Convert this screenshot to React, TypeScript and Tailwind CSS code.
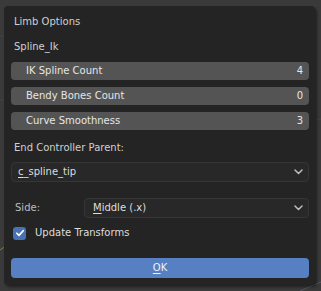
import React from "react";

function Chevron() {
  return (
    <svg width="9" height="6" viewBox="0 0 9 6" className="shrink-0">
      <path d="M1 1 L4.5 4.5 L8 1" fill="none" stroke="#bdbdbd" strokeWidth="1.5" strokeLinecap="round" strokeLinejoin="round" />
    </svg>
  );
}

function NumRow({ label, value, top }: { label: string; value: string; top: string }) {
  return (
    <div className={`${top} flex h-[18px] items-center justify-between rounded-[4px] bg-[#545454] pl-[15px] pr-[6px] text-[#e6e6e6]`}>
      <span>{label}</span>
      <span>{value}</span>
    </div>
  );
}

export default function App() {
  return (
    <div
      className="relative h-[291px] w-[321px] overflow-hidden bg-[#3a3a3a] pl-[4px] pt-[6px] text-[10px] leading-none"
      style={{ fontFamily: '"DejaVu Sans", sans-serif' }}
    >
      <svg className="absolute inset-0" width="321" height="291" viewBox="0 0 321 291">
        <line x1="0" y1="36" x2="4" y2="36" stroke="#444" strokeWidth="1" />
        <line x1="0" y1="100" x2="4" y2="100" stroke="#444" strokeWidth="1" />
        <line x1="0" y1="250" x2="6" y2="246" stroke="#6a8a3a" strokeWidth="1" />
        <line x1="300" y1="291" x2="321" y2="282" stroke="#556" strokeWidth="1" />
        <line x1="316" y1="120" x2="321" y2="119" stroke="#444" strokeWidth="1" />
      </svg>
      <div className="relative flex h-[279px] w-[311px] flex-col rounded-[4px] bg-[#242424] pl-[7px] pr-[6px] pt-[6px] text-[#d0d0d0] shadow-[2px_2px_3px_rgba(0,0,0,0.45)]">
        <div className="flex h-[20px] items-center pl-[3px]">Limb Options</div>
        <div className="mt-[5px] flex h-[20px] items-center pl-[3px]">Spline_Ik</div>
        <NumRow top="mt-[5px]" label="IK Spline Count" value="4" />
        <NumRow top="mt-[7px]" label="Bendy Bones Count" value="0" />
        <NumRow top="mt-[7px]" label="Curve Smoothness" value="3" />
        <div className="mt-[8px] flex h-[20px] items-center pl-[3px]">End Controller Parent:</div>
        <div className="mt-[4px] flex h-[20px] items-center justify-between rounded-[4px] border border-[#363636] bg-[#282828] pl-[6px] pr-[5px] text-[#dedede]">
          <span>
            <span className="underline underline-offset-2">c</span>_spline_tip
          </span>
          <Chevron />
        </div>
        <div className="mt-[16px] flex h-[20px] items-center">
          <div className="w-[73px] pl-[4px] text-[#bdbdbd]">Side:</div>
          <div className="flex h-[20px] flex-1 items-center justify-between rounded-[4px] border border-[#363636] bg-[#282828] pl-[8px] pr-[5px] text-[#dedede]">
            <span>
              <span className="underline underline-offset-2">M</span>iddle (.x)
            </span>
            <Chevron />
          </div>
        </div>
        <div className="mt-[5px] flex h-[20px] items-center pl-[2px]">
          <div className="flex h-[13px] w-[13px] items-center justify-center rounded-[3px] bg-[#4772b3]">
            <svg width="10" height="10" viewBox="0 0 10 10">
              <path d="M1.8 5.2 L4 7.4 L8.3 2.6" fill="none" stroke="#ffffff" strokeWidth="1.6" strokeLinecap="round" strokeLinejoin="round" />
            </svg>
          </div>
          <span className="ml-[9px] text-[#dedede]">Update Transforms</span>
        </div>
        <div className="mt-[15px] flex h-[20px] items-center justify-center rounded-[4px] bg-[#5680c2] text-[#f2f2f2]">
          <span>
            <span className="underline underline-offset-2">O</span>K
          </span>
        </div>
      </div>
    </div>
  );
}
